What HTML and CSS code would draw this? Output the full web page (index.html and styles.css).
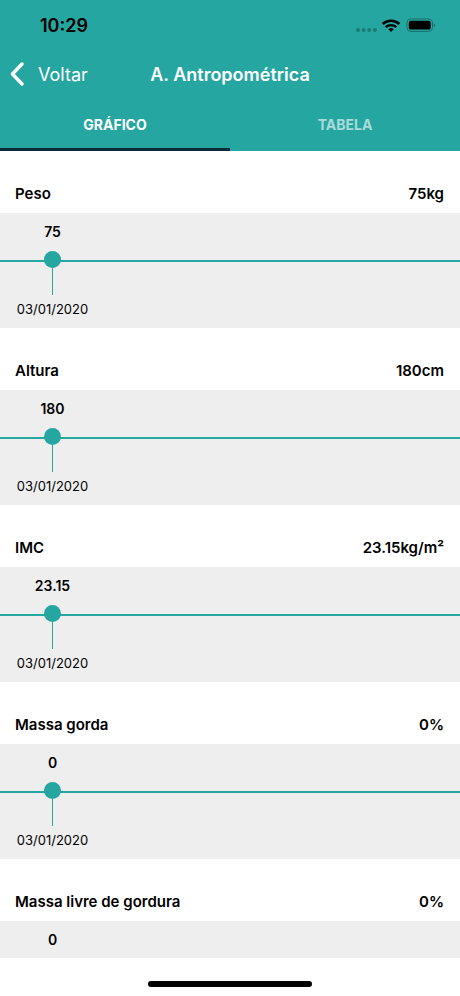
FILE: index.html
```html
<!DOCTYPE html>
<html lang="pt">
<head>
<meta charset="utf-8">
<meta name="viewport" content="width=device-width, initial-scale=1">
<title>A. Antropométrica</title>
<link rel="stylesheet" href="styles.css">
</head>
<body>
<header class="top">
  <div class="status">
    <time class="clock">10:29</time>
    <svg class="status-icons" width="82" height="16" viewBox="0 0 82 16" aria-hidden="true">
      <g fill="#1c7a76"><circle cx="3" cy="13" r="2"/><circle cx="8.6" cy="13" r="2"/><circle cx="14.2" cy="13" r="2"/><circle cx="19.8" cy="13" r="2"/></g>
      <g transform="translate(-2.5 1)">
        <path d="M30.2 6a12.2 12.2 0 0 1 16.6 0" fill="none" stroke="#000" stroke-width="2.6"/>
        <path d="M33.2 9.2a7.8 7.8 0 0 1 10.6 0" fill="none" stroke="#000" stroke-width="2.4"/>
        <path d="M38.5 14l-2.6-2.7a3.8 3.8 0 0 1 5.2 0z"/>
      </g>
      <rect x="52" y="2" width="25.5" height="12.4" rx="3.8" fill="none" stroke="#17706c"/>
      <rect x="53.8" y="3.8" width="21.9" height="8.8" rx="2.2"/>
      <path d="M78.7 6.2v4a2.2 2.2 0 0 0 0-4z" fill="#17706c"/>
    </svg>
  </div>
  <nav class="bar">
    <a class="back" href="#voltar">
      <svg width="14" height="24" viewBox="0 0 14 24" aria-hidden="true"><path d="M12 2L2.5 12L12 22" fill="none" stroke="#fff" stroke-width="3.4" stroke-linecap="round" stroke-linejoin="round"/></svg>
      <span>Voltar</span>
    </a>
    <h1 class="title">A. Antropométrica</h1>
  </nav>
  <div class="tabs" role="tablist">
    <button class="tab active" type="button" role="tab" aria-selected="true">GRÁFICO</button>
    <button class="tab" type="button" role="tab" aria-selected="false">TABELA</button>
  </div>
</header>
<main class="list">
  <section>
    <div class="heading"><h2>Peso</h2><strong>75kg</strong></div>
    <div class="chart"><div class="point"><b>75</b><i class="dot"></i><i class="stem"></i><time>03/01/2020</time></div></div>
  </section>
  <section>
    <div class="heading"><h2>Altura</h2><strong>180cm</strong></div>
    <div class="chart"><div class="point"><b>180</b><i class="dot"></i><i class="stem"></i><time>03/01/2020</time></div></div>
  </section>
  <section>
    <div class="heading"><h2>IMC</h2><strong>23.15kg/m²</strong></div>
    <div class="chart"><div class="point"><b>23.15</b><i class="dot"></i><i class="stem"></i><time>03/01/2020</time></div></div>
  </section>
  <section>
    <div class="heading"><h2>Massa gorda</h2><strong>0%</strong></div>
    <div class="chart"><div class="point"><b>0</b><i class="dot"></i><i class="stem"></i><time>03/01/2020</time></div></div>
  </section>
  <section>
    <div class="heading"><h2>Massa livre de gordura</h2><strong>0%</strong></div>
    <div class="chart"><div class="point"><b>0</b><i class="dot"></i><i class="stem"></i></div></div>
  </section>
</main>
<footer class="home"><span class="home-bar"></span></footer>
</body>
</html>
```
FILE: styles.css
```css
* {
  box-sizing: border-box;
}

body {
  margin: 0;
  height: 100vh;
  display: flex;
  flex-direction: column;
  background: #fff;
  color: #000;
  font-family: Inter, "Liberation Sans", sans-serif;
}

.top {
  flex: none;
  background: #26a6a1;
}

.status {
  display: flex;
  align-items: center;
  justify-content: space-between;
  height: 50px;
  padding: 0 23px 0 40px;
}

.clock {
  font-size: 18px;
  font-weight: 600;
}

.bar {
  display: grid;
  grid-template-columns: 1fr auto 1fr;
  align-items: center;
  height: 48px;
  padding: 0 10px;
  color: #fff;
}

.back {
  display: flex;
  align-items: center;
  gap: 14px;
  color: inherit;
  font-size: 18px;
  font-weight: 400;
  text-decoration: none;
}

.title {
  margin: 0;
  font-size: 18px;
  font-weight: 600;
}

.tabs {
  display: flex;
}

.tab {
  flex: 1;
  height: 53px;
  padding: 4px 0 0;
  border: 0;
  border-bottom: 3px solid transparent;
  background: none;
  color: #a8dbd9;
  font: 700 14px/20px Inter, "Liberation Sans", sans-serif;
}

.tab.active {
  border-bottom-color: #0c2a38;
  color: #fff;
}

.list {
  flex: 1;
  min-height: 0;
  overflow: hidden;
}

.heading {
  display: flex;
  justify-content: space-between;
  padding: 33px 16px 9px 15px;
  font-size: 15px;
  line-height: 20px;
}

.heading h2,
.heading strong {
  margin: 0;
  font-size: inherit;
  font-weight: 600;
}

.chart {
  position: relative;
  padding: 9px 0;
  background: #eee;
  font-size: 13px;
  line-height: 20px;
}

.chart::before {
  content: "";
  position: absolute;
  top: 47px;
  left: 0;
  right: 0;
  height: 2px;
  background: #26a6a1;
}

.point {
  position: relative;
  display: flex;
  flex-direction: column;
  align-items: center;
  width: 105px;
}

.point b {
  font-size: 14px;
  font-weight: 600;
}

.dot {
  width: 17px;
  height: 17px;
  margin-top: 9px;
  border-radius: 50%;
  background: #26a6a1;
}

.stem {
  width: 1px;
  height: 27px;
  margin-bottom: 4px;
  background: #26a6a1;
}

.home {
  flex: none;
  display: flex;
  justify-content: center;
  padding: 23px 0 9px;
}

.home-bar {
  width: 164px;
  height: 6px;
  border-radius: 3px;
  background: #000;
}
```
